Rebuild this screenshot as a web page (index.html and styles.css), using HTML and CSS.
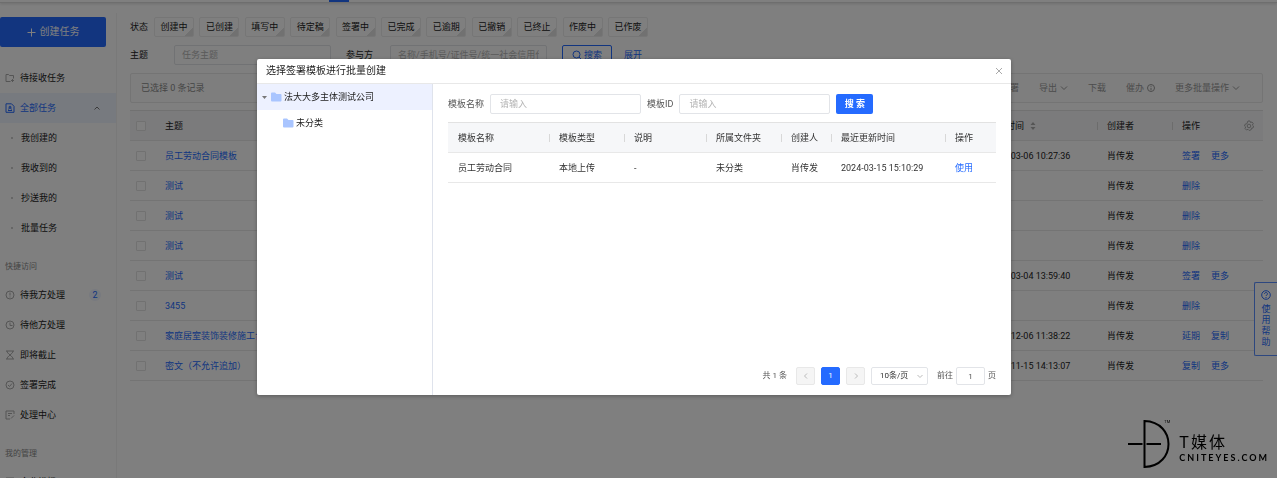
FILE: index.html
```html
<!DOCTYPE html>
<html lang="zh-CN">

<head>
    <meta charset="UTF-8">
    <meta name="viewport" content="width=device-width, initial-scale=1.0">
    <title>全部任务</title>
    <link rel="stylesheet" href="styles.css">
</head>

<body>

    <header class="topbar">
        <div class="topbar-tab"></div>
    </header>

    <div class="page">
        <nav class="sidebar">
            <button class="create-button" type="button">
                <svg width="9" height="9" viewBox="0 0 9 9"><path d="M4.5 0.5v8M0.5 4.5h8" /></svg>
                创建任务
            </button>
            <ul class="menu">
                <li><a href="#">
                    <svg class="icon" viewBox="0 0 10 10"><path d="M5.5 8.5h-4.500v-7h2.500l1 1h4v3M7.500 6v3M6 7.500h3" /></svg>
                    待接收任务</a></li>
                <li class="active"><a href="#">
                    <svg class="icon" viewBox="0 0 10 10"><path d="M1 .8h5.500l2.500 2.500v6h-8zM3 7.500h4M3.500 6.500c0-2 3-2 3 0" /><circle cx="5" cy="4.200" r="1" /></svg>
                    全部任务
                    <svg class="arrow" viewBox="0 0 8 8"><path d="M1.500 5.500l2.500-2.500 2.500 2.500" /></svg></a></li>
                <li class="sub"><a href="#">我创建的</a></li>
                <li class="sub"><a href="#">我收到的</a></li>
                <li class="sub"><a href="#">抄送我的</a></li>
                <li class="sub"><a href="#">批量任务</a></li>
            </ul>
            <h2 class="menu-title">快捷访问</h2>
            <ul class="menu">
                <li><a href="#">
                    <svg class="icon" viewBox="0 0 10 10"><circle cx="5" cy="5" r="4" /><path d="M5 2.500v3M5 6.500v1" /></svg>
                    待我方处理 <span class="count">2</span></a></li>
                <li><a href="#">
                    <svg class="icon" viewBox="0 0 10 10"><circle cx="5" cy="5" r="4" /><path d="M5 2.500v3h2.500" /></svg>
                    待他方处理</a></li>
                <li><a href="#">
                    <svg class="icon" viewBox="0 0 10 10"><path d="M1 1h8M1 9h8M2 1c0 3 6 5 6 8M8 1c0 3-6 5-6 8" /></svg>
                    即将截止</a></li>
                <li><a href="#">
                    <svg class="icon" viewBox="0 0 10 10"><circle cx="5" cy="5" r="4" /><path d="M3 5l1.500 1.500 2.500-3" /></svg>
                    签署完成</a></li>
                <li><a href="#">
                    <svg class="icon" viewBox="0 0 10 10"><path d="M9 4v-3h-8v8h4M3 3.500h4M3 5.500h2M6 8.500l3-3" /></svg>
                    处理中心</a></li>
            </ul>
            <h2 class="menu-title">我的管理</h2>
            <ul class="menu">
                <li><a href="#">
                    <svg class="icon" viewBox="0 0 10 10"><path d="M1 9v-8h8v8z" /></svg>
                    企业模板</a></li>
            </ul>
        </nav>

        <main class="content">
            <div class="status-row">
                <span class="label">状态</span>
                <div class="status-list">
                    <button type="button">创建中</button>
                    <button type="button">已创建</button>
                    <button type="button">填写中</button>
                    <button type="button">待定稿</button>
                    <button type="button">签署中</button>
                    <button type="button">已完成</button>
                    <button type="button">已逾期</button>
                    <button type="button">已撤销</button>
                    <button type="button">已终止</button>
                    <button type="button">作废中</button>
                    <button type="button">已作废</button>
                </div>
            </div>

            <form class="filter">
                <label for="topic">主题</label>
                <input class="text-input" id="topic" type="text" placeholder="任务主题">
                <label for="party">参与方</label>
                <input class="text-input" id="party" type="text" placeholder="名称/手机号/证件号/统一社会信用代码">
                <button class="outline-button" type="button">
                    <svg class="icon" viewBox="0 0 10 10"><circle cx="4.500" cy="4.500" r="3.500" /><path d="M7 7l2.500 2.500" /></svg>
                    搜索
                </button>
                <a href="#">展开</a>
            </form>

            <div class="toolbar">
                <span>已选择 0 条记录</span>
                <div class="toolbar-actions">
                    <button type="button">签署</button>
                    <button type="button">导出 <svg class="arrow" viewBox="0 0 8 8"><path d="M1 2.500l3 3 3-3" /></svg></button>
                    <button type="button">下载</button>
                    <button type="button">催办 <svg class="arrow" viewBox="0 0 8 8"><circle cx="4" cy="4" r="3.500" /><path d="M4 1.800v1M4 3.800v2.500" /></svg></button>
                    <button type="button">更多批量操作 <svg class="arrow" viewBox="0 0 8 8"><path d="M1 2.500l3 3 3-3" /></svg></button>
                </div>
            </div>

            <table class="task-table">
                <thead>
                    <tr>
                        <th class="col-check"><input type="checkbox" aria-label="全选"></th>
                        <th>主题</th>
                        <th class="col-time">更新时间 <svg class="sort" viewBox="0 0 6 10"><path d="M3 1l2.500 3h-5zM3 9l2.500-3h-5z" /></svg></th>
                        <th class="col-owner divided">创建者</th>
                        <th class="col-action divided">
                            <div class="action-head">操作
                                <svg class="gear" viewBox="0 0 12 12"><path d="M5 1h2l.5 1.500 1.500-.5 1.300 1.700-1 1.300 1.200 1-.5 2-1.500.2-.3 1.500-2 .8-1.200-1.200-1.500.7-1.500-1.500.7-1.500-1.200-1 .8-2 1.500-.2z" /><circle cx="6" cy="6" r="1.800" /></svg>
                            </div>
                        </th>
                    </tr>
                </thead>
                <tbody>
                    <tr>
                        <td><input type="checkbox" aria-label="选择"></td>
                        <td><a href="#">员工劳动合同模板</a></td>
                        <td>2024-03-06 10:27:36</td>
                        <td>肖传发</td>
                        <td><a href="#">签署</a><a href="#">更多</a></td>
                    </tr>
                    <tr>
                        <td><input type="checkbox" aria-label="选择"></td>
                        <td><a href="#">测试</a></td>
                        <td></td>
                        <td>肖传发</td>
                        <td><a href="#">删除</a></td>
                    </tr>
                    <tr>
                        <td><input type="checkbox" aria-label="选择"></td>
                        <td><a href="#">测试</a></td>
                        <td></td>
                        <td>肖传发</td>
                        <td><a href="#">删除</a></td>
                    </tr>
                    <tr>
                        <td><input type="checkbox" aria-label="选择"></td>
                        <td><a href="#">测试</a></td>
                        <td></td>
                        <td>肖传发</td>
                        <td><a href="#">删除</a></td>
                    </tr>
                    <tr>
                        <td><input type="checkbox" aria-label="选择"></td>
                        <td><a href="#">测试</a></td>
                        <td>2024-03-04 13:59:40</td>
                        <td>肖传发</td>
                        <td><a href="#">签署</a><a href="#">更多</a></td>
                    </tr>
                    <tr>
                        <td><input type="checkbox" aria-label="选择"></td>
                        <td><a href="#">3455</a></td>
                        <td></td>
                        <td>肖传发</td>
                        <td><a href="#">删除</a></td>
                    </tr>
                    <tr>
                        <td><input type="checkbox" aria-label="选择"></td>
                        <td><a href="#">家庭居室装饰装修施工合同</a></td>
                        <td>2023-12-06 11:38:22</td>
                        <td>肖传发</td>
                        <td><a href="#">延期</a><a href="#">复制</a></td>
                    </tr>
                    <tr>
                        <td><input type="checkbox" aria-label="选择"></td>
                        <td><a href="#">密文（不允许追加）</a></td>
                        <td>2023-11-15 14:13:07</td>
                        <td>肖传发</td>
                        <td><a href="#">复制</a><a href="#">更多</a></td>
                    </tr>
                </tbody>
            </table>
        </main>
    </div>

    <button class="help" type="button">
        <svg viewBox="0 0 10 10"><circle cx="5" cy="5" r="4.300" /><path d="M3.500 4c0-2 3-2 3 0 0 1-1.500 1-1.500 2M5 7v1" /></svg>
        使用帮助
    </button>

    <div class="overlay">
        <div class="modal" role="dialog" aria-labelledby="modal-title">
            <div class="modal-header">
                <h1 id="modal-title">选择签署模板进行批量创建</h1>
                <button class="close" type="button" aria-label="关闭">
                    <svg viewBox="0 0 8 8"><path d="M1 1l6 6M7 1l-6 6" /></svg>
                </button>
            </div>
            <div class="modal-body">
                <ul class="tree">
                    <li class="selected">
                        <svg class="caret" viewBox="0 0 5 5"><path d="M0 1h5l-2.500 3z" /></svg>
                        <svg class="folder" viewBox="0 0 11 10"><path d="M0 1.500q0-1 1-1h3l1.500 1.500h4q1 0 1 1v5.500q0 1-1 1h-8.500q-1 0-1-1z" /></svg>
                        法大大多主体测试公司
                    </li>
                    <li class="child">
                        <svg class="folder" viewBox="0 0 11 10"><path d="M0 1.500q0-1 1-1h3l1.500 1.500h4q1 0 1 1v5.500q0 1-1 1h-8.500q-1 0-1-1z" /></svg>
                        未分类
                    </li>
                </ul>
                <div class="panel">
                    <form class="search">
                        <label for="template-name">模板名称</label>
                        <input class="text-input" id="template-name" type="text" placeholder="请输入">
                        <label for="template-id">模板ID</label>
                        <input class="text-input" id="template-id" type="text" placeholder="请输入">
                        <button class="primary-button" type="button">搜 索</button>
                    </form>

                    <table class="template-table">
                        <thead>
                            <tr>
                                <th class="w-name">模板名称</th>
                                <th class="w-type divided">模板类型</th>
                                <th class="w-note divided">说明</th>
                                <th class="w-type divided">所属文件夹</th>
                                <th class="w-owner divided">创建人</th>
                                <th class="w-time divided">最近更新时间</th>
                                <th class="w-use divided">操作</th>
                            </tr>
                        </thead>
                        <tbody>
                            <tr>
                                <td>员工劳动合同</td>
                                <td>本地上传</td>
                                <td>-</td>
                                <td>未分类</td>
                                <td>肖传发</td>
                                <td>2024-03-15 15:10:29</td>
                                <td><a href="#">使用</a></td>
                            </tr>
                        </tbody>
                    </table>

                    <div class="pagination">
                        <span class="total">共 1 条</span>
                        <button class="page-button" type="button" aria-label="上一页" disabled>
                            <svg class="arrow" viewBox="0 0 8 8"><path d="M5 1.500l-2.500 2.500 2.500 2.500" /></svg>
                        </button>
                        <button class="page-button current" type="button">1</button>
                        <button class="page-button" type="button" aria-label="下一页" disabled>
                            <svg class="arrow" viewBox="0 0 8 8"><path d="M3 1.500l2.500 2.500-2.500 2.500" /></svg>
                        </button>
                        <div class="page-size">
                            <select aria-label="每页条数">
                                <option>10条/页</option>
                                <option>20条/页</option>
                            </select>
                            <svg class="arrow" viewBox="0 0 8 8"><path d="M1.500 3l2.500 2.500 2.500-2.500" /></svg>
                        </div>
                        <div class="jump">
                            <label for="jump">前往</label>
                            <input id="jump" type="text" value="1">
                            <span>页</span>
                        </div>
                    </div>
                </div>
            </div>
        </div>
    </div>

    <div class="watermark">
        <svg viewBox="0 0 42 50"><path d="M16.500 2v46c32-1 32-45 0-46zM0 25h14.500M18.500 25h14.500" /></svg>
        <span class="tm">TM</span>
        <div class="watermark-text">
            <div class="brand">T媒体</div>
            <div class="domain">CNITEYES.COM</div>
        </div>
    </div>

</body>

</html>
```
FILE: styles.css
```css
* {
    box-sizing: border-box;
}

body {
    margin: 0;
    height: 100vh;
    overflow: hidden;
    font-family: Roboto, "Noto Sans CJK SC", sans-serif;
    font-size: 9px;
    line-height: 12px;
    color: #222;
    background-color: #fff;
}

button, input, select {
    font: inherit;
    color: inherit;
    margin: 0;
    padding: 0;
}

button {
    cursor: pointer;
    white-space: nowrap;
}

a {
    color: #256bff;
    text-decoration: none;
}

ul {
    list-style: none;
    margin: 0;
    padding: 0;
}

svg {
    fill: none;
    stroke: currentColor;
    flex: none;
}

.icon {
    width: 10px;
    height: 10px;
}

.arrow {
    width: 8px;
    height: 8px;
}

.topbar {
    height: 3px;
    border-bottom: 1px solid #dcdcdc;
    box-shadow: 0 1px 3px #ddd;
}

.topbar-tab {
    width: 20px;
    height: 2px;
    margin-left: 329px;
    background-color: #256bff;
}

.page {
    display: flex;
    padding-top: 10px;
}

/* left menu */
.sidebar {
    flex: none;
    width: 117px;
    padding-top: 4px;
    border-right: 1px solid #f2f2f2;
}

.create-button {
    display: flex;
    align-items: center;
    justify-content: center;
    gap: 4px;
    width: 106px;
    height: 30px;
    margin-bottom: 16px;
    border: 0;
    border-radius: 2px;
    background-color: #256bff;
    color: #fff;
    font-size: 10px;
}

.menu a {
    display: flex;
    align-items: center;
    gap: 5px;
    height: 30px;
    padding: 0 15px 0 5px;
    color: #222;
}

.menu .icon, .menu .arrow {
    color: #aaa;
}

.menu .arrow {
    margin-left: auto;
    color: #777;
}

.menu .active a {
    background-color: #eff4ff;
}

.menu .active a, .menu .active .icon {
    color: #256bff;
}

.menu .sub a {
    gap: 8px;
    padding-left: 11px;
}

.menu .sub a::before {
    content: "";
    width: 2px;
    height: 2px;
    border-radius: 1px;
    background-color: #bbb;
}

.count {
    margin-left: auto;
    width: 12px;
    border-radius: 6px;
    background-color: #eff4ff;
    color: #256bff;
    text-align: center;
}

.menu-title {
    margin: 18px 0 7px 5px;
    font-size: 8px;
    line-height: 12px;
    font-weight: normal;
    color: #888;
}

/* task list */
.content {
    flex: 1;
    padding: 4px 14px 0 13px;
}

.status-row, .filter {
    display: flex;
    align-items: center;
}

.status-row {
    margin-bottom: 8px;
}

.status-row .label {
    width: 24px;
}

.status-list {
    display: flex;
    justify-content: space-between;
    width: 494px;
}

.status-list button {
    width: 40px;
    height: 20px;
    border: 1px solid #ececec;
    border-radius: 2px;
    background: linear-gradient(135deg, transparent 85%, #e2e2e2 85%);
}

.text-input {
    height: 20px;
    padding: 0 9px;
    border: 1px solid #e2e4e8;
    border-radius: 2px;
    background-color: #fff;
    outline: 0;
}

.text-input::placeholder {
    color: #b4b4b4;
    opacity: 1;
}

.filter {
    margin-bottom: 8px;
}

.filter label {
    width: 44px;
}

.filter .text-input {
    width: 157px;
    padding: 0 7px;
    margin-right: 15px;
}

.outline-button {
    display: flex;
    align-items: center;
    justify-content: center;
    gap: 2px;
    width: 50px;
    height: 20px;
    margin-right: 12px;
    border: 1px solid #256bff;
    border-radius: 2px;
    background-color: #fff;
    color: #256bff;
}

.toolbar {
    display: flex;
    align-items: center;
    justify-content: space-between;
    height: 30px;
    margin-bottom: 7px;
    padding: 0 22px 0 10px;
    border: 1px solid #e9e9e9;
    border-radius: 2px;
    background-color: #fcfcfc;
    color: #8c8c8c;
}

.toolbar-actions {
    display: flex;
    gap: 20px;
}

.toolbar-actions button {
    display: flex;
    align-items: center;
    gap: 3px;
    border: 0;
    background: none;
    color: #999;
}

table {
    width: 100%;
    border-collapse: collapse;
    table-layout: fixed;
}

th, td {
    height: 30px;
    padding: 0 0 0 10px;
    border-bottom: 1px solid #e8e8e8;
    text-align: left;
    font-weight: normal;
    white-space: nowrap;
}

th {
    border-top: 1px solid #e2e2e2;
    background-color: #f6f7f9;
}

.divided {
    background-image: linear-gradient(#d8d8d8, #d8d8d8);
    background-repeat: no-repeat;
    background-position: left center;
    background-size: 1px 8px;
}

.task-table th:first-child, .task-table td:first-child {
    padding-left: 6px;
}

.task-table input {
    display: block;
    appearance: none;
    width: 10px;
    height: 10px;
    border: 1px solid #e2e2e2;
    border-radius: 1px;
    background-color: #fff;
}

.task-table td a + a {
    margin-left: 11px;
}

.col-check {
    width: 25px;
}

.col-time {
    width: 119px;
}

.col-owner {
    width: 75px;
}

.col-action {
    width: 91px;
}

.sort {
    width: 6px;
    height: 10px;
    margin-left: 4px;
    vertical-align: middle;
    fill: #aaa;
    stroke: none;
}

.action-head {
    display: flex;
    align-items: center;
    justify-content: space-between;
    padding-right: 8px;
}

.gear {
    width: 12px;
    height: 12px;
    color: #aaa;
}

.help {
    position: fixed;
    top: 282px;
    right: 0;
    width: 23px;
    height: 74px;
    padding: 0 6px;
    border: 1px solid #5b8fff;
    border-right: 0;
    border-radius: 2px 0 0 2px;
    background-color: #fff;
    color: #256bff;
    line-height: 11px;
    white-space: normal;
}

.help svg {
    display: block;
    width: 10px;
    height: 10px;
    margin-bottom: 4px;
}

/* dialog */
.overlay {
    position: fixed;
    top: 0;
    right: 0;
    bottom: 0;
    left: 0;
    display: flex;
    justify-content: center;
    align-items: flex-start;
    padding: 59px 9px 0 0;
    background-color: rgba(0, 0, 0, 0.5);
}

.modal {
    display: flex;
    flex-direction: column;
    width: 59%;
    min-width: 754px;
    min-height: 336px;
    border-radius: 2px;
    background-color: #fff;
    box-shadow: 0 1px 4px rgba(0, 0, 0, 0.3);
}

.modal-header {
    display: flex;
    align-items: center;
    justify-content: space-between;
    height: 25px;
    padding: 0 8px 0 9px;
    border-bottom: 1px solid #e8e8e8;
}

.modal-header h1 {
    margin: 0;
    font-size: 10px;
    font-weight: normal;
}

.close {
    display: flex;
    border: 0;
    background: none;
    color: #aaa;
}

.close svg {
    width: 8px;
    height: 8px;
}

.modal-body {
    flex: 1;
    display: flex;
}

.tree {
    flex: none;
    width: 176px;
    border-right: 1px solid #dfe3ec;
}

.tree li {
    display: flex;
    align-items: center;
    gap: 2px;
    height: 25px;
    padding-left: 5px;
}

.tree .selected {
    height: 26px;
    background-color: #edf1ff;
}

.tree .child {
    padding-left: 26px;
}

.caret {
    width: 5px;
    height: 5px;
    margin-right: 2px;
    fill: #777;
    stroke: none;
}

.folder {
    width: 11px;
    height: 10px;
    fill: #a9c5ff;
    stroke: none;
}

.panel {
    flex: 1;
    display: flex;
    flex-direction: column;
    padding: 10px 15px;
}

.search {
    display: flex;
    align-items: center;
    gap: 6px;
    margin-bottom: 8px;
    color: #555;
}

.search .text-input {
    width: 151px;
}

.primary-button {
    width: 37px;
    height: 20px;
    border: 0;
    border-radius: 2px;
    background-color: #256bff;
    color: #fff;
    font-weight: bold;
}

.template-table {
    color: #333;
}

.w-name {
    width: 101px;
}

.w-type {
    width: 75px;
}

.w-note {
    width: 82px;
}

.w-owner {
    width: 50px;
}

.w-use {
    width: 51px;
}

.pagination {
    display: flex;
    align-items: center;
    justify-content: flex-end;
    gap: 6px;
    margin-top: auto;
    font-size: 8px;
    color: #555;
}

.total {
    margin-right: 3px;
}

.page-button {
    display: flex;
    align-items: center;
    justify-content: center;
    width: 19px;
    height: 18px;
    border: 1px solid #e8e8e8;
    border-radius: 2px;
    background-color: #f5f5f5;
    color: #bbb;
}

.page-button.current {
    border-color: #256bff;
    background-color: #256bff;
    color: #fff;
}

.page-size {
    position: relative;
    width: 57px;
    height: 18px;
}

.page-size select {
    appearance: none;
    width: 100%;
    height: 100%;
    padding-left: 8px;
    border: 1px solid #e2e4e8;
    border-radius: 2px;
    background-color: #fff;
    color: #333;
}

.page-size .arrow {
    position: absolute;
    top: 5px;
    right: 4px;
    color: #bbb;
}

.jump {
    display: flex;
    align-items: center;
    gap: 3px;
    margin-left: 3px;
}

.jump input {
    width: 29px;
    height: 18px;
    border: 1px solid #e2e4e8;
    border-radius: 2px;
    text-align: center;
}

.watermark {
    position: fixed;
    right: 8px;
    bottom: 9px;
    display: flex;
    align-items: center;
    color: #000;
}

.watermark svg {
    width: 42px;
    height: 50px;
    stroke-width: 2;
}

.tm {
    align-self: flex-start;
    width: 10px;
    margin-left: -6px;
    margin-right: 5px;
    font-size: 4px;
    line-height: 6px;
}

.watermark-text {
    padding-top: 8px;
}

.brand {
    font-size: 16px;
    line-height: 20px;
    letter-spacing: 2px;
}

.domain {
    font-family: Lato, sans-serif;
    font-size: 9px;
    line-height: 10px;
    font-weight: bold;
    letter-spacing: 2px;
}
```
